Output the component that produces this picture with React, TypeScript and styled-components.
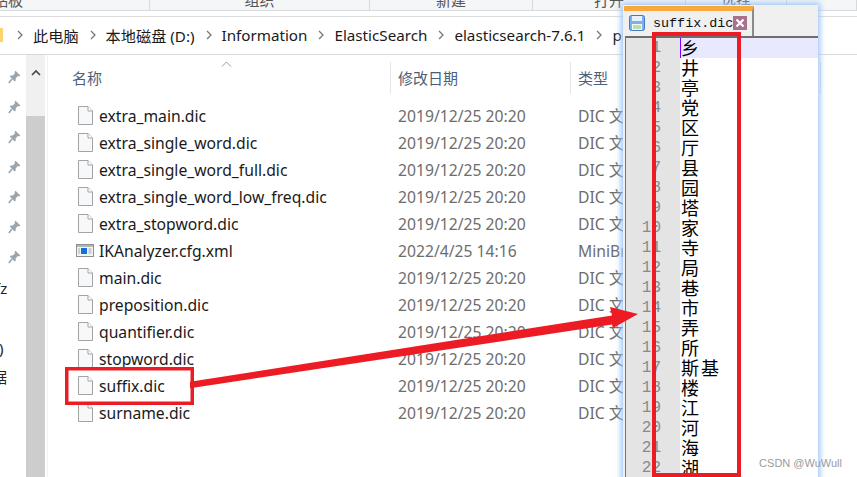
import React from "react";
import styled, { createGlobalStyle } from "styled-components";

const Global = createGlobalStyle`
  html, body { margin: 0; padding: 0; background: #fff; }
  #root { width: 857px; height: 477px; }
`;
const UI = `"Noto Sans", "Noto Sans CJK SC", sans-serif`;

const Page = styled.div`
  position: relative; width: 857px; height: 477px; overflow: hidden; background: #fff;
  font-family: ${UI}; font-size: 15.7px;
`;
const Ribbon = styled.div`
  display: flex; height: 10px; overflow: hidden; background: #f5f6f7; border-bottom: 1px solid #dadbdc;
  font-size: 15px;
`;
const RibbonGroup = styled.div<{ $w: number }>`
  flex: 0 0 ${p => p.$w}px; height: 10px; box-sizing: border-box; border-right: 1px solid #d8d9da;
  display: flex; justify-content: center; align-items: flex-end; color: #555; line-height: 20px;
  &:first-child { justify-content: flex-start; margin-left: -22px; flex-basis: ${p => p.$w + 22}px; }
`;
const RibbonGap = styled.div`height: 5px; border-bottom: 1px solid #dcdcdc;`;
const Breadcrumb = styled.div`
  display: flex; align-items: center; height: 38px; box-sizing: border-box; padding-bottom: 2px; border-bottom: 1px solid #d9d9d9;
  color: #1a1a1a; font-size: 15.2px; white-space: nowrap;
`;
const FolderSliver = styled.span`width: 3px; height: 14px; margin-right: 14px; background: #fbd56e;`;
const Chevron = styled.svg`width: 6px; height: 10px; margin-right: 10px; flex: none;`;
const Crumb = styled.span`margin-right: 11px;`;
const Body = styled.div`display: flex; height: 422px;`;
const NavPane = styled.div`
  width: 26px; flex: none; overflow: hidden; display: flex; flex-direction: column; align-items: flex-end;
  padding: 15px 0 0;
`;
const PinSlot = styled.div`width: 26px; height: 30px; display: flex; justify-content: center; padding-left: 3px; box-sizing: border-box;`;
const NavText = styled.div<{ $top: number; $left: number }>`
  align-self: flex-start; margin-left: ${p => p.$left}px; margin-top: ${p => p.$top}px; color: #222; line-height: 20px; white-space: nowrap; font-size: 15px;
`;
const Scrollbar = styled.div`width: 19px; flex: none; display: flex; flex-direction: column; background: #f0f0f0;`;
const ScrollUp = styled.div`height: 61px; display: flex; justify-content: center; padding-top: 14px; box-sizing: border-box;`;
const ScrollThumb = styled.div`flex: 1; background: #cdcdcd;`;
const Files = styled.div`flex: 1; position: relative; border-left: 1px solid #f1f1f1; margin-left: 2px;`;
const HeaderRow = styled.div`
  display: grid; grid-template-columns: 343px 180px 250px; height: 32px; margin-top: 7px; align-items: center;
  color: #4c607a; font-size: 15px;
`;
const HeaderCell = styled.div<{ $first?: boolean }>`
  height: 32px; display: flex; align-items: center; box-sizing: border-box; padding-bottom: 2px;
  padding-left: ${p => (p.$first ? 24 : 7)}px;
  border-right: 1px solid #e5e5e5;
`;
const SortCaret = styled.svg`position: absolute; left: 173px; top: 6px; width: 11px; height: 6px;`;
const FileList = styled.div`margin-top: 8px;`;
const FileRow = styled.div`
  display: grid; grid-template-columns: 343px 180px 1fr; height: 27px; align-items: center; white-space: nowrap;
`;
const NameCell = styled.div`display: flex; align-items: center; padding-left: 27px; color: #1a1a1a;`;
const IconBox = styled.span`width: 24px; display: flex; justify-content: center; margin-right: 2px; margin-left: -2px;`;
const MetaCell = styled.div`padding-left: 7px; color: #6d6d6d;`;

const Notepad = styled.div`
  position: absolute; left: 623px; top: 5px; width: 195px; height: 480px;
  box-shadow: 0 0 6px 2px #9cc4fb; background: #f0f0f0; display: flex; flex-direction: column;
`;
const TabStrip = styled.div`height: 31px; flex: none; display: flex; background: #f0f0f0;`;
const Tab = styled.div`
  width: 130px; margin: 1px 0 0 1px; box-sizing: border-box; border-top: 5px solid #f9a83c; border-right: 2px solid #8a8a8a;
  display: flex; align-items: center; padding: 0 0 0 5px;
`;
const SaveIcon = styled.svg`width: 16px; height: 16px; margin-top: -2px; flex: none;`;
const TabName = styled.span`
  margin-left: 8px; font: 13.4px "Liberation Mono", monospace; color: #111; width: 80px; overflow: hidden; white-space: nowrap;
`;
const CloseBox = styled.span`
  width: 14px; height: 14px; margin-top: -2px; background: #a8708c; display: flex; align-items: center; justify-content: center;
`;
const Editor = styled.div`
  flex: 1; display: flex; border-top: 2px solid #6e6e6e; background: #fff; min-height: 0; margin-left: 2px;
  border-left: 1px solid #777;
`;
const Gutter = styled.div`
  width: 54px; flex: none; background: #e4e4e4; color: #8a8a8a; text-align: right;
  font: 16px/20px "Liberation Mono", monospace; padding-right: 19px; box-sizing: border-box;
`;
const Lines = styled.div`flex: 1;`;
const Line = styled.div<{ $active?: boolean }>`
  height: 20px; line-height: 18px; font-size: 18px; letter-spacing: 2px; color: #000; white-space: nowrap;
  font-family: "Noto Sans CJK SC", sans-serif;
  background: ${p => (p.$active ? "#e8e8ff" : "transparent")};
  border-left: 1px solid ${p => (p.$active ? "#8000ff" : "transparent")};
`;
const Annotations = styled.svg`position: absolute; left: 0; top: 0; width: 857px; height: 477px; pointer-events: none;`;
const Watermark = styled.div`
  position: absolute; right: 15px; top: 457px; font: 11px "Liberation Sans", sans-serif; color: #9b9b9b;
`;

const FileIcon = () => (
  <svg width="15" height="19" viewBox="0 0 15 19">
    <path d="M.5.5H10L14.5 5V18.5H.5Z" fill="#f7f8fa" stroke="#a3a3a3" />
    <path d="M10 .5V5H14.5" fill="#fff" stroke="#a3a3a3" />
  </svg>
);
const XmlIcon = () => (
  <svg width="18" height="13" viewBox="0 0 18 13">
    <rect x=".5" y=".5" width="17" height="12" fill="#f4f4f4" stroke="#8f8f8f" />
    <rect x="1" y="1" width="16" height="2" fill="#b5b5b5" />
    <rect x="5" y="4" width="6" height="6" fill="#0a74da" />
    <path d="M12.5 5h3M12.5 7h3M12.5 9h3M2 5h2M2 7h2M2 9h2" stroke="#a8a8a8" />
  </svg>
);
const Pin = () => (
  <svg width="13" height="14" viewBox="0 0 13 14">
    <path d="M7.5 .8 12.4 5.6 11 6.6 9.8 6 7.6 8.4 7.8 10.4 6.6 11.4 1.8 6.6 2.8 5.4 4.8 5.6 7 3.2 6.5 2Z" fill="#9aa5ad" />
    <path d="M4 9 .8 13" stroke="#9aa5ad" strokeWidth="1.6" />
  </svg>
);
const Chev = () => (
  <Chevron viewBox="0 0 6 10"><path d="M1 1l4 4-4 4" fill="none" stroke="#777" strokeWidth="1.3" /></Chevron>
);

const d = "2019/12/25 20:20";
const files: [string, string, string, boolean?][] = [
  ["extra_main.dic", d, "DIC 文件"],
  ["extra_single_word.dic", d, "DIC 文件"],
  ["extra_single_word_full.dic", d, "DIC 文件"],
  ["extra_single_word_low_freq.dic", d, "DIC 文件"],
  ["extra_stopword.dic", d, "DIC 文件"],
  ["IKAnalyzer.cfg.xml", "2022/4/25 14:16", "MiniBrowser", true],
  ["main.dic", d, "DIC 文件"],
  ["preposition.dic", d, "DIC 文件"],
  ["quantifier.dic", d, "DIC 文件"],
  ["stopword.dic", d, "DIC 文件"],
  ["suffix.dic", d, "DIC 文件"],
  ["surname.dic", d, "DIC 文件"],
];
const words = "乡 井 亭 党 区 厅 县 园 塔 家 寺 局 巷 市 弄 所 斯基 楼 江 河 海 湖".split(" ");
const crumbs = ["此电脑", "本地磁盘 (D:)", "Information", "ElasticSearch", "elasticsearch-7.6.1", "plugins"];
const groups: [number, string][] = [[150, "剪贴板"], [220, "组织"], [163, "新建"], [153, "打开"], [101, "选择"], [70, ""]];

export default function App() {
  return (
    <Page>
      <Global />
      <Ribbon>
        {groups.map(([w, t]) => <RibbonGroup key={w} $w={w}>{t}</RibbonGroup>)}
      </Ribbon>
      <RibbonGap />
      <Breadcrumb>
        <FolderSliver />
        {crumbs.map(c => (
          <React.Fragment key={c}><Chev /><Crumb>{c}</Crumb></React.Fragment>
        ))}
      </Breadcrumb>
      <Body>
        <NavPane>
          {[0, 1, 2, 3, 4, 5, 6].map(i => (
            <PinSlot key={i}><Pin /></PinSlot>
          ))}
          <NavText $top={-2} $left={-5}>fz</NavText>
          <NavText $top={40} $left={-1}>)</NavText>
          <NavText $top={9} $left={-8}>据</NavText>
        </NavPane>
        <Scrollbar>
          <ScrollUp>
            <svg width="10" height="7" viewBox="0 0 10 7"><path d="M1 6l4-4 4 4" fill="none" stroke="#444" strokeWidth="1.6" /></svg>
          </ScrollUp>
          <ScrollThumb />
        </Scrollbar>
        <Files>
          <SortCaret viewBox="0 0 11 6"><path d="M1 5.5 5.5 1 10 5.5" fill="none" stroke="#9a9a9a" /></SortCaret>
          <HeaderRow>
            <HeaderCell $first>名称</HeaderCell>
            <HeaderCell>修改日期</HeaderCell>
            <HeaderCell>类型</HeaderCell>
          </HeaderRow>
          <FileList>
            {files.map(([n, t, k, xml]) => (
              <FileRow key={n}>
                <NameCell><IconBox>{xml ? <XmlIcon /> : <FileIcon />}</IconBox>{n}</NameCell>
                <MetaCell>{t}</MetaCell>
                <MetaCell>{k}</MetaCell>
              </FileRow>
            ))}
          </FileList>
        </Files>
      </Body>
      <Notepad>
        <TabStrip>
          <Tab>
            <SaveIcon viewBox="0 0 16 16">
              <rect x=".5" y=".5" width="15" height="15" rx="2" fill="#7fb0e8" stroke="#3f78c4" />
              <rect x="3" y="1" width="10" height="5" fill="#e8f0fa" />
              <rect x="3" y="9" width="10" height="6" fill="#f4f8f4" />
              <path d="M4 11h8M4 13h8" stroke="#8cc06a" />
            </SaveIcon>
            <TabName>suffix.dic</TabName>
            <CloseBox>
              <svg width="10" height="10" viewBox="0 0 10 10"><path d="M1.5 1.5l7 7M8.5 1.5l-7 7" stroke="#fff" strokeWidth="2.2" /></svg>
            </CloseBox>
          </Tab>
        </TabStrip>
        <Editor>
          <Gutter>
            {words.map((_, i) => <div key={i}>{i + 1}</div>)}
          </Gutter>
          <Lines>
            {words.map((w, i) => <Line key={i} $active={i === 0}>{w}</Line>)}
          </Lines>
        </Editor>
      </Notepad>
      <Annotations viewBox="0 0 857 477">
        <rect x="66.75" y="368.75" width="125.5" height="34.5" fill="none" stroke="#ed1c24" strokeWidth="3.5" />
        <rect x="654" y="34" width="85" height="441" fill="none" stroke="#ed1c24" strokeWidth="4" />
        <polygon points="190,381.8 612,315.5 610,307 638,314 613,328 612,324.5 190,388.3" fill="#ed1c24" />
      </Annotations>
      <Watermark>CSDN @WuWull</Watermark>
    </Page>
  );
}
